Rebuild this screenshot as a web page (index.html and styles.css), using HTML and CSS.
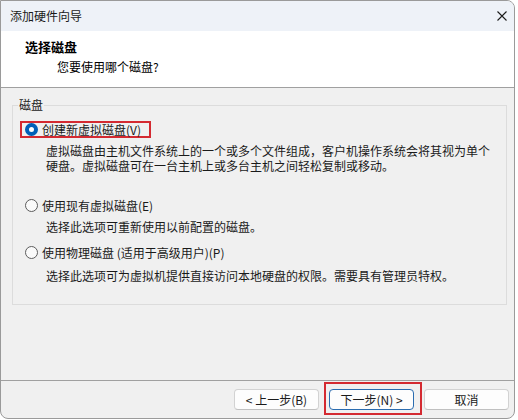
FILE: index.html
```html
<!DOCTYPE html>
<html lang="zh-CN">
<head>
    <meta charset="UTF-8">
    <title>添加硬件向导</title>
    <link rel="stylesheet" href="styles.css">
</head>
<body>
    <div class="window">
        <div class="titlebar">
            <span class="title">添加硬件向导</span>
            <svg class="close" width="10" height="10" viewBox="0 0 10 10">
                <path d="M0.5 0.5 L9.5 9.5 M9.5 0.5 L0.5 9.5" stroke="#1c1c1c" stroke-width="1.1" fill="none"/>
            </svg>
        </div>

        <div class="header">
            <h1>选择磁盘</h1>
            <p>您要使用哪个磁盘?</p>
        </div>

        <div class="content">
            <fieldset class="group">
                <legend>磁盘</legend>

                <label class="option marked"><span class="radio checked"></span>创建新虚拟磁盘(V)</label>
                <p class="desc">虚拟磁盘由主机文件系统上的一个或多个文件组成，客户机操作系统会将其视为单个硬盘。虚拟磁盘可在一台主机上或多台主机之间轻松复制或移动。</p>

                <label class="option second"><span class="radio"></span>使用现有虚拟磁盘(E)</label>
                <p class="desc">选择此选项可重新使用以前配置的磁盘。</p>

                <label class="option third"><span class="radio"></span>使用物理磁盘 (适用于高级用户)(P)</label>
                <p class="desc last">选择此选项可为虚拟机提供直接访问本地硬盘的权限。需要具有管理员特权。</p>
            </fieldset>
        </div>

        <div class="footer">
            <button class="btn">&lt; 上一步(B)</button>
            <button class="btn default marked-btn">下一步(N) &gt;</button>
            <button class="btn">取消</button>
        </div>
    </div>
</body>
</html>
```

FILE: styles.css
```css
* {
    margin: 0;
    padding: 0;
    box-sizing: border-box;
    font-family: "Noto Sans CJK SC", "Noto Sans", sans-serif;
}

body {
    background: #ffffff;
    color: #1a1a1a;
    font-size: 12px;
}

.window {
    width: 515px;
    height: 419px;
    border: 1px solid #9a9a9a;
    border-radius: 0 8px 8px 8px;
    overflow: hidden;
    background: #f0f0f0;
    display: flex;
    flex-direction: column;
}

/* Title bar */
.titlebar {
    height: 30px;
    background: #eef2f8;
    display: flex;
    align-items: center;
    justify-content: space-between;
    padding: 0 7px 0 9px;
}

.title {
    font-size: 12px;
    line-height: 16px;
    color: #1a1a1a;
}

/* White header */
.header {
    height: 57px;
    background: #ffffff;
    border-bottom: 1px solid #a0a0a0;
    padding: 8px 0 0 24px;
}

.header h1 {
    font-size: 13px;
    font-weight: bold;
    line-height: 16px;
    color: #000;
}

.header p {
    margin: 4px 0 0 32px;
    font-size: 12px;
    line-height: 16px;
    color: #000;
}

/* Main area */
.content {
    height: 292px;
    padding: 9px 7px 0 11px;
}

.group {
    height: 208px;
    border: 1px solid #dcdcdc;
    padding: 0;
    margin: 0;
    min-width: 0;
}

.group legend {
    margin-left: 5px;
    padding: 0 1px;
    font-size: 12px;
    line-height: 16px;
}

.option {
    display: flex;
    align-items: center;
    gap: 4px;
    width: fit-content;
    margin: 8px 0 0 7px;
    padding: 0 8px 0 3px;
    border: 2px solid transparent;
    font-size: 12px;
    line-height: 13px;
}

.option.marked {
    border-color: #d42a31;
}

.option.second {
    margin-top: 24px;
}

.option.third {
    margin-top: 10px;
}

.radio {
    width: 13px;
    height: 13px;
    border-radius: 50%;
    border: 1px solid #5c5c5c;
    background: #fafafa;
    flex-shrink: 0;
}

.radio.checked {
    border: 4px solid #005fb8;
    background: #ffffff;
}

.desc {
    margin: 5px 0 0 33px;
    width: 450px;
    font-size: 12px;
    line-height: 15px;
}

.desc.last {
    margin-top: 7px;
}

/* Buttons */
.footer {
    flex: 1;
    border-top: 1px solid #a0a0a0;
    display: flex;
    justify-content: flex-end;
    align-items: flex-start;
    gap: 10px;
    padding: 8px 5px 0 0;
}

.btn {
    width: 85px;
    height: 21px;
    background: #fdfdfd;
    border: 1px solid #d2d2d2;
    border-bottom-color: #c0c0c0;
    border-radius: 4px;
    font-size: 12px;
    line-height: 16px;
    color: #1a1a1a;
    cursor: pointer;
}

.btn.default {
    border-color: #2a6cb0;
}

.marked-btn {
    position: relative;
}

.marked-btn::after {
    content: "";
    position: absolute;
    top: -8px;
    left: -6px;
    right: -9px;
    bottom: -6px;
    border: 2px solid #d42a31;
}
```
